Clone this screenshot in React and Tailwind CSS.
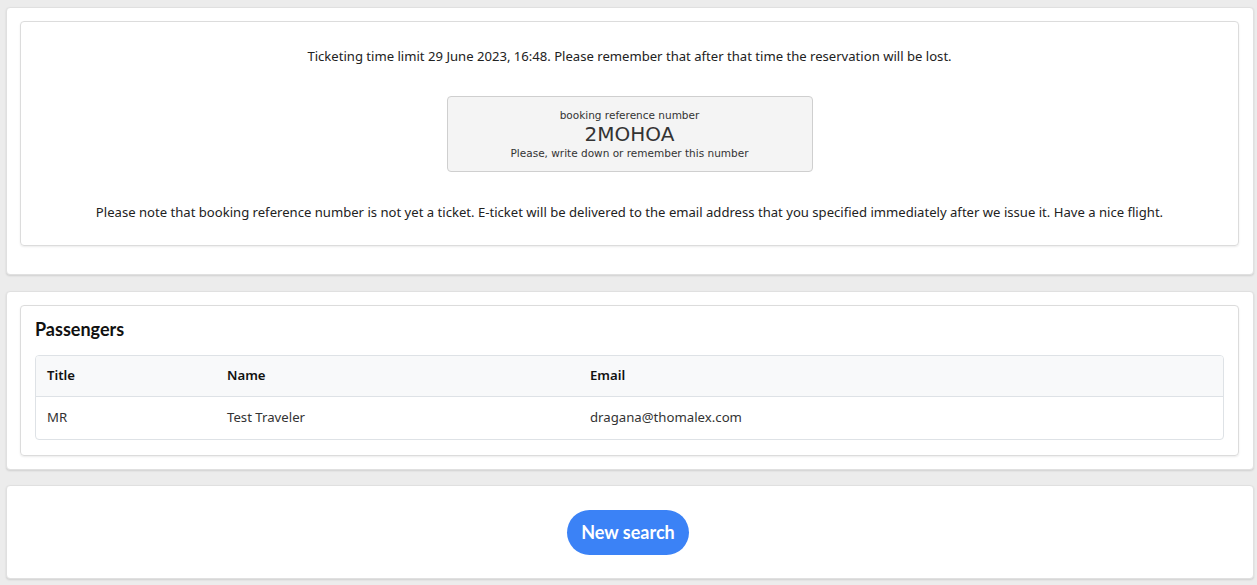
export default function App() {
  const body = { fontFamily: '"Noto Sans", "Open Sans", sans-serif' };
  return (
    <div className="min-h-[585px] bg-[#ececec] pl-[6px] pr-[3px] pt-[7px] pb-[6px] flex flex-col gap-[16px]" style={body}>
      <div className="bg-white rounded-[4px] border border-[#e0e0e0] shadow-[0_1px_2px_rgba(0,0,0,0.12)] p-[13px] pr-[14px] pb-[28px]">
        <div className="rounded-[4px] border border-[#dcdcdc] shadow-[0_1px_2px_rgba(0,0,0,0.08)] pt-[25px] pb-[24px] flex flex-col items-center text-[13.1px] text-[#222]">
          <p className="leading-[18px]">Ticketing time limit 29 June 2023, 16:48. Please remember that after that time the reservation will be lost.</p>
          <div className="mt-[31px] w-[366px] h-[76px] bg-[#f4f4f4] border border-[#cfcfcf] rounded-[4px] flex flex-col items-center justify-center text-[#333]" style={{ fontFamily: '"DejaVu Sans", Tahoma, sans-serif' }}>
            <div className="text-[10.5px] leading-[16px]">booking reference number</div>
            <div className="text-[20px] leading-[22px]">2MOHOA</div>
            <div className="text-[10.5px] leading-[16px]">Please, write down or remember this number</div>
          </div>
          <p className="mt-[31px] leading-[18px]">Please note that booking reference number is not yet a ticket. E-ticket will be delivered to the email address that you specified immediately after we issue it. Have a nice flight.</p>
        </div>
      </div>

      <div className="bg-white rounded-[4px] border border-[#e0e0e0] shadow-[0_1px_2px_rgba(0,0,0,0.12)] p-[13px] pr-[14px]">
        <div className="rounded-[4px] border border-[#dcdcdc] shadow-[0_1px_2px_rgba(0,0,0,0.08)] px-[14px] pt-[11px] pb-[15px]">
          <h2 className="text-[18px] font-bold text-[#111] leading-[24px]" style={{ fontFamily: 'Lato, sans-serif' }}>Passengers</h2>
          <div className="mt-[14px] border border-[#dee2e6] rounded-[4px] overflow-hidden text-[13.2px]">
            <div className="flex bg-[#f8f9fa] border-b border-[#dee2e6] h-[41px] items-center font-semibold text-[#111]">
              <div className="w-[180px] px-[11px]">Title</div>
              <div className="w-[363px] px-[11px]">Name</div>
              <div className="flex-1 px-[11px]">Email</div>
            </div>
            <div className="flex h-[42px] items-center text-[#333]">
              <div className="w-[180px] px-[11px]">MR</div>
              <div className="w-[363px] px-[11px]">Test Traveler</div>
              <div className="flex-1 px-[11px]">dragana@thomalex.com</div>
            </div>
          </div>
        </div>
      </div>

      <div className="bg-white rounded-[4px] border border-[#e0e0e0] shadow-[0_1px_2px_rgba(0,0,0,0.12)] h-[94px] -mt-[1px] pr-[4px] flex items-center justify-center">
        <button className="w-[122px] h-[45px] rounded-full bg-[#3b82f6] text-white text-[18px] font-bold" style={{ fontFamily: 'Lato, sans-serif' }}>New search</button>
      </div>
    </div>
  );
}
